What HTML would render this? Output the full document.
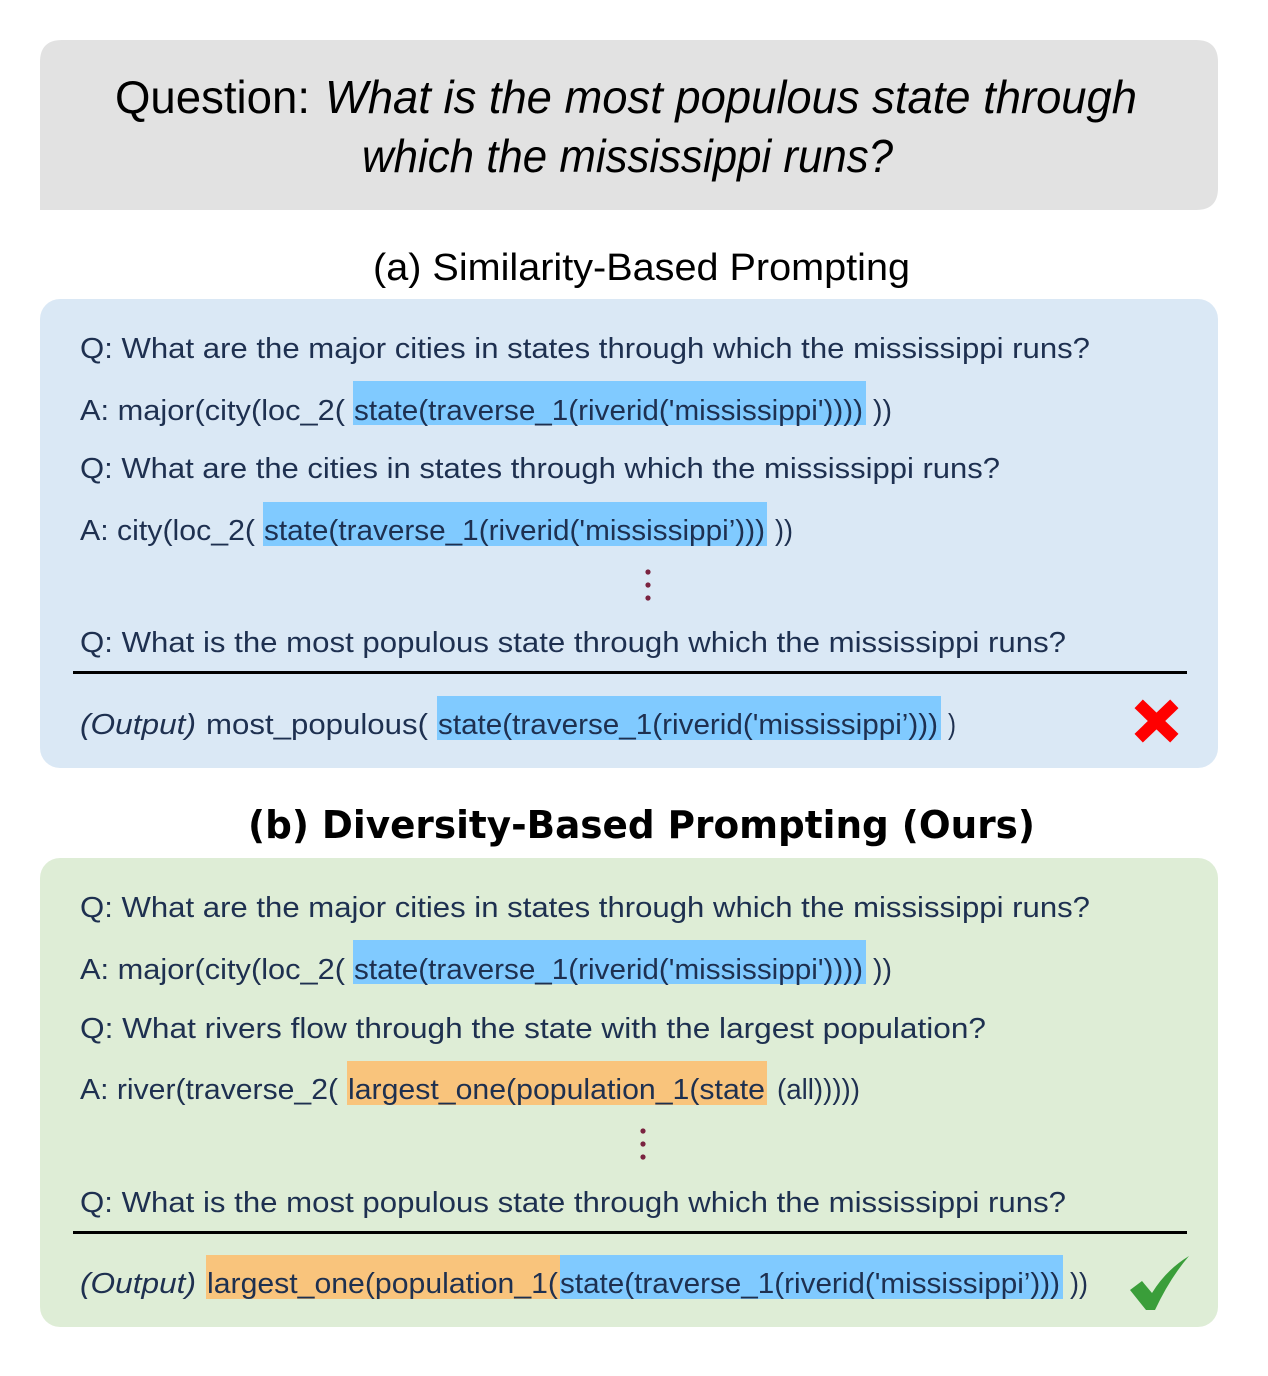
<!DOCTYPE html>
<html><head><meta charset="utf-8"><style>
html,body{margin:0;padding:0;background:#fff;}
svg{display:block;}
text{font-family:"Liberation Sans",sans-serif;}
.t{fill:#1e3050;font-size:29px;}
</style></head><body>
<svg width="1268" height="1376" viewBox="0 0 1268 1376" xmlns="http://www.w3.org/2000/svg">
<path d="M40 62 Q40 40 62 40 L1196 40 Q1218 40 1218 62 L1218 188 Q1218 210 1196 210 L40 210 Z" fill="#e2e2e2"/>
<text x="115" y="113" font-size="46" fill="#000" textLength="195" lengthAdjust="spacingAndGlyphs">Question:</text>
<text x="325" y="113" font-size="46" font-style="italic" fill="#000" textLength="812" lengthAdjust="spacingAndGlyphs">What is the most populous state through</text>
<text x="362" y="172" font-size="46" font-style="italic" fill="#000" textLength="531" lengthAdjust="spacingAndGlyphs">which the mississippi runs?</text>

<text x="373" y="280" font-size="38" fill="#000" textLength="537" lengthAdjust="spacingAndGlyphs">(a) Similarity-Based Prompting</text>

<rect x="40" y="299" width="1178" height="469" rx="20" fill="#dae8f5"/>
<rect x="353" y="381" width="513" height="44" fill="#80caff"/>
<rect x="263" y="502" width="504" height="44" fill="#80caff"/>
<rect x="437" y="696" width="504" height="44" fill="#80caff"/>
<text class="t" x="80" y="358" textLength="1010" lengthAdjust="spacingAndGlyphs">Q: What are the major cities in states through which the mississippi runs?</text>
<text class="t" x="80" y="420" textLength="265" lengthAdjust="spacingAndGlyphs">A: major(city(loc_2(</text>
<text class="t" x="354" y="420" textLength="509" lengthAdjust="spacingAndGlyphs">state(traverse_1(riverid('mississippi'))))</text>
<text class="t" x="873" y="420" textLength="19" lengthAdjust="spacingAndGlyphs">))</text>
<text class="t" x="80" y="478" textLength="920" lengthAdjust="spacingAndGlyphs">Q: What are the cities in states through which the mississippi runs?</text>
<text class="t" x="80" y="540" textLength="175" lengthAdjust="spacingAndGlyphs">A: city(loc_2(</text>
<text class="t" x="264" y="540" textLength="501" lengthAdjust="spacingAndGlyphs">state(traverse_1(riverid('mississippi’)))</text>
<text class="t" x="775" y="540" textLength="18" lengthAdjust="spacingAndGlyphs">))</text>
<circle cx="648" cy="572" r="2.6" fill="#7a2340"/><circle cx="648" cy="585" r="2.6" fill="#7a2340"/><circle cx="648" cy="598" r="2.6" fill="#7a2340"/>
<text class="t" x="80" y="652" textLength="986" lengthAdjust="spacingAndGlyphs">Q: What is the most populous state through which the mississippi runs?</text>
<rect x="73" y="671" width="1114" height="3" fill="#000"/>
<text class="t" x="80" y="734" font-style="italic" textLength="116" lengthAdjust="spacingAndGlyphs">(Output)</text>
<text class="t" x="206" y="734" textLength="222" lengthAdjust="spacingAndGlyphs">most_populous(</text>
<text class="t" x="438" y="734" textLength="500" lengthAdjust="spacingAndGlyphs">state(traverse_1(riverid('mississippi’)))</text>
<text class="t" x="948" y="734" textLength="8" lengthAdjust="spacingAndGlyphs">)</text>
<path d="M1143 708 L1170 734 M1170 708 L1143 734" stroke="#ff0000" stroke-width="12" stroke-linecap="square"/>

<text x="248" y="838" font-size="38" font-weight="bold" fill="#000" textLength="787" lengthAdjust="spacingAndGlyphs" style="font-family:'DejaVu Sans',sans-serif">(b) Diversity-Based Prompting (Ours)</text>

<rect x="40" y="858" width="1178" height="469" rx="20" fill="#deedd6"/>
<rect x="353" y="940" width="513" height="44" fill="#80caff"/>
<rect x="347" y="1061" width="420" height="44" fill="#f9c47c"/>
<rect x="206" y="1255" width="354" height="44" fill="#f9c47c"/>
<rect x="560" y="1255" width="503" height="44" fill="#80caff"/>
<text class="t" x="80" y="917" textLength="1010" lengthAdjust="spacingAndGlyphs">Q: What are the major cities in states through which the mississippi runs?</text>
<text class="t" x="80" y="979" textLength="265" lengthAdjust="spacingAndGlyphs">A: major(city(loc_2(</text>
<text class="t" x="354" y="979" textLength="509" lengthAdjust="spacingAndGlyphs">state(traverse_1(riverid('mississippi'))))</text>
<text class="t" x="873" y="979" textLength="19" lengthAdjust="spacingAndGlyphs">))</text>
<text class="t" x="80" y="1038" textLength="906" lengthAdjust="spacingAndGlyphs">Q: What rivers flow through the state with the largest population?</text>
<text class="t" x="80" y="1099" textLength="258" lengthAdjust="spacingAndGlyphs">A: river(traverse_2(</text>
<text class="t" x="348" y="1099" textLength="417" lengthAdjust="spacingAndGlyphs">largest_one(population_1(state</text>
<text class="t" x="777" y="1099" textLength="83" lengthAdjust="spacingAndGlyphs">(all)))))</text>
<circle cx="643" cy="1131" r="2.6" fill="#7a2340"/><circle cx="643" cy="1144" r="2.6" fill="#7a2340"/><circle cx="643" cy="1157" r="2.6" fill="#7a2340"/>
<text class="t" x="80" y="1212" textLength="986" lengthAdjust="spacingAndGlyphs">Q: What is the most populous state through which the mississippi runs?</text>
<rect x="73" y="1231" width="1114" height="3" fill="#000"/>
<text class="t" x="80" y="1293" font-style="italic" textLength="116" lengthAdjust="spacingAndGlyphs">(Output)</text>
<text class="t" x="207" y="1293" textLength="351" lengthAdjust="spacingAndGlyphs">largest_one(population_1(</text>
<text class="t" x="560" y="1293" textLength="500" lengthAdjust="spacingAndGlyphs">state(traverse_1(riverid('mississippi’)))</text>
<text class="t" x="1070" y="1293" textLength="18" lengthAdjust="spacingAndGlyphs">))</text>
<path d="M1130 1290 L1142 1281 L1152 1293 Q1166 1270 1189 1256 Q1170 1278 1155 1310 L1146 1310 Z" fill="#3a9e3a"/>
</svg>
</body></html>
